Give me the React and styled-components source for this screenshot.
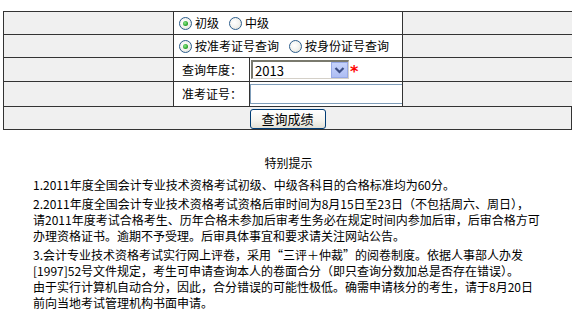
import React from "react";
import styled, { createGlobalStyle } from "styled-components";

const Global = createGlobalStyle`
  html, body { margin: 0; padding: 0; background: #fff; }
  body {
    font-family: "Noto Sans CJK SC", "Liberation Sans", sans-serif;
    font-size: 12px;
    color: #000;
  }
`;

const Page = styled.div`
  width: 577px;
  height: 311px;
  overflow: hidden;
  padding-top: 11px;
  box-sizing: border-box;
`;

const Table = styled.div`
  margin-left: 3px;
  width: 569px;
  display: grid;
  grid-template-columns: 170px 76px 153px 170px;
  grid-template-rows: 23px 23px 24px 25px 23px;
  border-bottom: 1px solid #333;
`;

const Cell = styled.div`
  box-sizing: border-box;
  border-top: 1px solid #333;
  border-left: 1px solid #333;
  border-right: ${(p) => (p.$closed ? "1px solid #333" : "none")};
  background: ${(p) => (p.$grey ? "#f0f0f0" : "#fff")};
  grid-column: ${(p) => p.$span || "auto"};
  display: flex;
  align-items: center;
  justify-content: ${(p) => (p.$center ? "center" : "flex-start")};
  padding-left: ${(p) => p.$pad || 0}px;
  white-space: nowrap;
  line-height: 1;
`;

const Option = styled.label`
  display: inline-flex;
  align-items: center;
  margin-right: 10px;
`;

const Radio = styled.span`
  width: 13px;
  height: 13px;
  box-sizing: border-box;
  border-radius: 50%;
  border: 1px solid #2c5d8c;
  background: radial-gradient(circle at 40% 40%, #ffffff 0%, #f3f3ef 50%, #d8d8d0 100%);
  display: inline-flex;
  align-items: center;
  justify-content: center;
  margin-right: 3px;
  &::after {
    content: "";
    display: ${(p) => (p.$on ? "block" : "none")};
    width: 5px;
    height: 5px;
    border-radius: 50%;
    background: radial-gradient(circle at 40% 40%, #8ee88e 0%, #2ea82e 60%, #1c7a1c 100%);
  }
`;

const SelectBox = styled.div`
  margin-left: 1px;
  width: 98px;
  height: 19px;
  box-sizing: border-box;
  border-top: 2px solid #7a7a6e;
  border-left: 2px solid #7a7a6e;
  border-bottom: 1px solid #d4d0c8;
  border-right: 1px solid #d4d0c8;
  background: #fff;
  display: flex;
  align-items: center;
  justify-content: space-between;
  padding-left: 2px;
  font-size: 13px;
`;

const Arrow = styled.span`
  width: 17px;
  height: 16px;
  box-sizing: border-box;
  background: linear-gradient(#c6d3fb, #aebef3);
  border: 1px solid #97a9e6;
  display: flex;
  align-items: center;
  justify-content: center;
`;

const Star = styled.span`
  color: #f00;
  font-family: "DejaVu Sans", sans-serif;
  font-size: 16px;
  font-weight: bold;
  margin-left: 1px;
  margin-top: 5px;
`;

const TextInput = styled.input`
  width: 153px;
  height: 20px;
  box-sizing: border-box;
  border: 1px solid #7f9db9;
  margin: 0;
  padding: 0 2px;
  outline: none;
  background: #fff;
`;

const Button = styled.button`
  width: 76px;
  height: 20px;
  box-sizing: border-box;
  border: 1px solid #003c74;
  border-radius: 3px;
  background: linear-gradient(#ffffff 0%, #f4f3ee 60%, #e3e0d5 100%);
  font-family: "Noto Sans CJK SC", sans-serif;
  font-size: 13px;
  line-height: 1;
  padding: 0;
  color: #000;
  margin-top: 1px;
`;

const Notes = styled.div`
  margin-top: 25px;
  padding-left: 33px;
  line-height: 16px;
  font-size: 12px;
`;

const Title = styled.div`
  text-align: center;
  margin-left: -33px;
  margin-bottom: 6px;
`;

const Para = styled.p`
  margin: 0 0 3px 0;
  white-space: nowrap;
`;

export default function App() {
  return (
    <Page>
      <Global />
      <Table>
        <Cell $grey />
        <Cell $span="span 2" $pad={5}>
          <Option><Radio $on />初级</Option>
          <Option><Radio />中级</Option>
        </Cell>
        <Cell $grey />

        <Cell $grey />
        <Cell $span="span 2" $pad={5}>
          <Option><Radio $on />按准考证号查询</Option>
          <Option><Radio />按身份证号查询</Option>
        </Cell>
        <Cell $grey />

        <Cell $grey />
        <Cell $pad={8}>查询年度：</Cell>
        <Cell>
          <SelectBox>
            2013
            <Arrow>
              <svg width="11" height="8" viewBox="0 0 11 8">
                <path d="M1.5 2 L5.5 6 L9.5 2" fill="none" stroke="#3d4f86" strokeWidth="2.2" />
              </svg>
            </Arrow>
          </SelectBox>
          <Star>*</Star>
        </Cell>
        <Cell $grey />

        <Cell $grey />
        <Cell $pad={8}>准考证号：</Cell>
        <Cell>
          <TextInput type="text" />
        </Cell>
        <Cell $grey />

        <Cell $grey $closed $center $span="1 / -1">
          <Button>查询成绩</Button>
        </Cell>
      </Table>

      <Notes>
        <Title>特别提示</Title>
        <Para>1.2011年度全国会计专业技术资格考试初级、中级各科目的合格标准均为60分。</Para>
        <Para>
          2.2011年度全国会计专业技术资格考试资格后审时间为8月15日至23日（不包括周六、周日），<br />
          请2011年度考试合格考生、历年合格未参加后审考生务必在规定时间内参加后审，后审合格方可<br />
          办理资格证书。逾期不予受理。后审具体事宜和要求请关注网站公告。
        </Para>
        <Para>
          3.会计专业技术资格考试实行网上评卷，采用“三评＋仲裁”的阅卷制度。依据人事部人办发<br />
          [1997]52号文件规定，考生可申请查询本人的卷面合分（即只查询分数加总是否存在错误）。<br />
          由于实行计算机自动合分，因此，合分错误的可能性极低。确需申请核分的考生，请于8月20日<br />
          前向当地考试管理机构书面申请。
        </Para>
      </Notes>
    </Page>
  );
}
